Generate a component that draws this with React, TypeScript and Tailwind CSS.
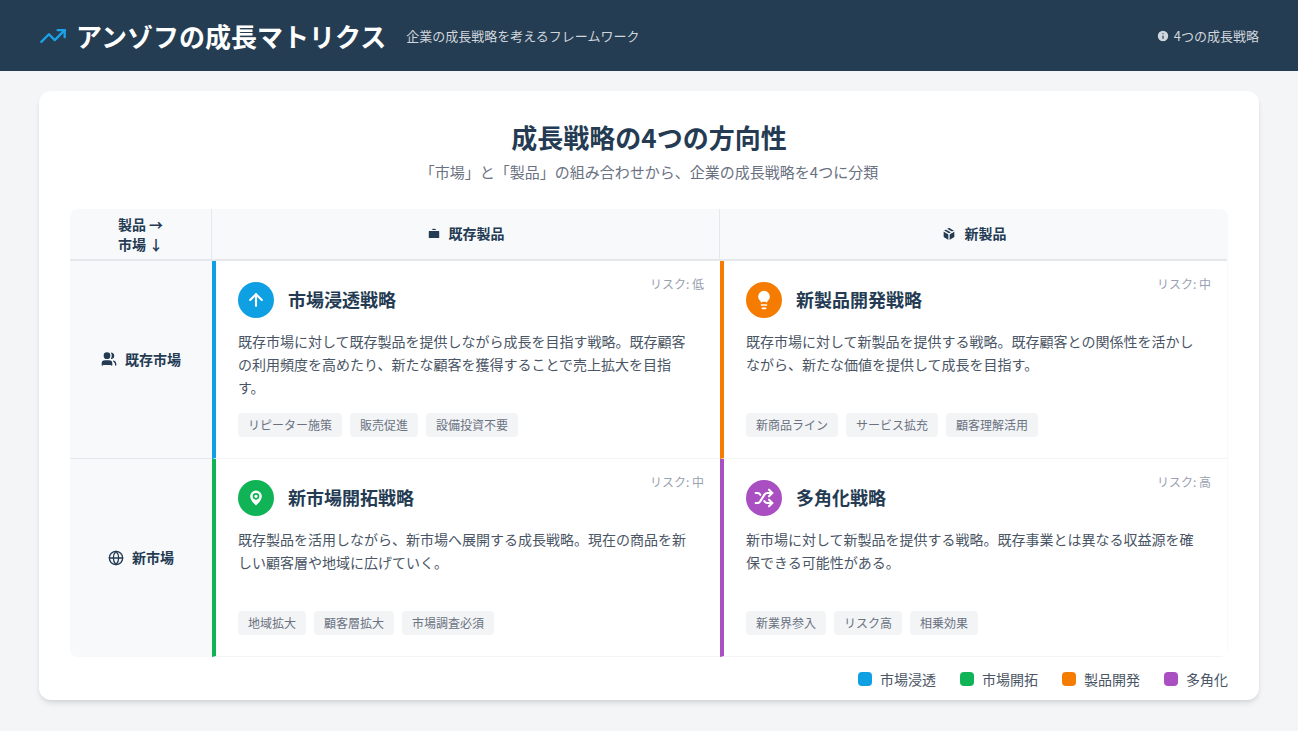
import React from "react";
import { TrendingUp, Info, ArrowUp, Lightbulb, MapPin, Shuffle, Users, Globe, Briefcase, Package } from "lucide-react";

const font = { fontFamily: '"Noto Sans CJK JP", "Noto Sans", sans-serif' };

type Cell = { title: string; risk: string; desc: string; tags: string[]; bar: string; bg: string; icon: React.ReactNode };

const cells: Cell[][] = [
  [
    { title: "市場浸透戦略", risk: "リスク: 低", desc: "既存市場に対して既存製品を提供しながら成長を目指す戦略。既存顧客の利用頻度を高めたり、新たな顧客を獲得することで売上拡大を目指す。", tags: ["リピーター施策", "販売促進", "設備投資不要"], bar: "border-[#0ea0e3]", bg: "bg-[#0ea0e3]", icon: <ArrowUp className="w-5 h-5" strokeWidth={2.5} /> },
    { title: "新製品開発戦略", risk: "リスク: 中", desc: "既存市場に対して新製品を提供する戦略。既存顧客との関係性を活かしながら、新たな価値を提供して成長を目指す。", tags: ["新商品ライン", "サービス拡充", "顧客理解活用"], bar: "border-[#f57c00]", bg: "bg-[#f57c00]", icon: <Lightbulb className="w-5 h-5" fill="white" strokeWidth={2} /> },
  ],
  [
    { title: "新市場開拓戦略", risk: "リスク: 中", desc: "既存製品を活用しながら、新市場へ展開する成長戦略。現在の商品を新しい顧客層や地域に広げていく。", tags: ["地域拡大", "顧客層拡大", "市場調査必須"], bar: "border-[#10b356]", bg: "bg-[#10b356]", icon: <MapPin className="w-5 h-5" fill="white" stroke="#10b356" strokeWidth={2} /> },
    { title: "多角化戦略", risk: "リスク: 高", desc: "新市場に対して新製品を提供する戦略。既存事業とは異なる収益源を確保できる可能性がある。", tags: ["新業界参入", "リスク高", "相乗効果"], bar: "border-[#a94fc2]", bg: "bg-[#a94fc2]", icon: <Shuffle className="w-5 h-5" strokeWidth={2.5} /> },
  ],
];

function CellView({ c }: { c: Cell }) {
  return (
    <div className={`relative bg-white border-l-4 ${c.bar} pl-[22px] pr-6 pt-[21px] h-[198px] border-b border-b-gray-100`}>
      <div className="absolute top-[14px] right-[16px] text-[12px] text-gray-400">{c.risk}</div>
      <div className="flex items-center gap-[14px]">
        <div className={`w-9 h-9 rounded-full ${c.bg} text-white flex items-center justify-center`}>{c.icon}</div>
        <div className="text-[18px] font-bold text-[#243b53]">{c.title}</div>
      </div>
      <p className="mt-[12px] text-[14px] leading-[23px] text-gray-600">{c.desc}</p>
      <div className="absolute left-[22px] top-[152px] flex gap-2">
        {c.tags.map((t) => (
          <span key={t} className="px-[10px] py-[3px] text-[12px] rounded bg-gray-100 text-gray-500">{t}</span>
        ))}
      </div>
    </div>
  );
}

export default function App() {
  return (
    <div style={font} className="w-[1298px] h-[731px] bg-[#f4f5f7] overflow-hidden">
      <header className="h-[71px] bg-[#243d52] flex items-center px-[39px]">
        <TrendingUp className="w-7 h-7 text-[#1aa3e8]" strokeWidth={2} />
        <h1 className="ml-[9px] text-[26px] font-bold text-white">アンゾフの成長マトリクス</h1>
        <span className="ml-[20px] text-[13px] text-gray-300">企業の成長戦略を考えるフレームワーク</span>
        <div className="ml-auto flex items-center gap-1 text-[13px] text-gray-300">
          <Info className="w-[14px] h-[14px] fill-gray-300 text-[#243d52]" />
          4つの成長戦略
        </div>
      </header>
      <main className="mx-[39px] mt-5 bg-white rounded-xl shadow-md h-[609px] px-[31px] pt-[26px]">
        <h2 className="text-center text-[26px] font-bold text-[#243b53] leading-[40px]">成長戦略の4つの方向性</h2>
        <p className="text-center text-[15px] text-gray-500 mt-[4px]">「市場」と「製品」の組み合わせから、企業の成長戦略を4つに分類</p>
        <div className="mt-[25px] rounded-lg overflow-hidden bg-[#f7f9fb] grid grid-cols-[142px_508px_507px]">
          <div className="h-[52px] flex flex-col items-center justify-center text-[14px] font-bold text-[#243b53] leading-[20px] border-r border-gray-200 border-b-2 border-b-gray-200">
            <span>製品 →</span><span>市場 ↓</span>
          </div>
          <div className="h-[52px] flex items-center justify-center gap-2 text-[14px] font-bold text-[#243b53] border-r border-gray-200 border-b-2 border-b-gray-200">
            <Briefcase className="w-[14px] h-[14px]" fill="#243b53" stroke="#f7f9fb" />既存製品
          </div>
          <div className="h-[52px] flex items-center justify-center gap-2 text-[14px] font-bold text-[#243b53] border-b-2 border-gray-200">
            <Package className="w-[16px] h-[16px]" fill="#243b53" stroke="#f7f9fb" />新製品
          </div>
          {cells.map((row, i) => (
            <React.Fragment key={i}>
              <div className={`flex items-center justify-center gap-2 text-[14px] font-bold text-[#243b53] ${i === 0 ? "border-b border-gray-200" : ""}`}>
                {i === 0 ? <Users className="w-4 h-4" fill="#243b53" /> : <Globe className="w-4 h-4" />}
                {i === 0 ? "既存市場" : "新市場"}
              </div>
              <CellView c={row[0]} />
              <CellView c={row[1]} />
            </React.Fragment>
          ))}
        </div>
        <div className="flex justify-end gap-6 mt-[12px] mr-[0px] text-[14px] text-gray-600">
          {[["bg-[#0ea0e3]", "市場浸透"], ["bg-[#10b356]", "市場開拓"], ["bg-[#f57c00]", "製品開発"], ["bg-[#a94fc2]", "多角化"]].map(([c, l]) => (
            <div key={l} className="flex items-center gap-2">
              <span className={`w-[14px] h-[14px] rounded-sm ${c}`} />
              {l}
            </div>
          ))}
        </div>
      </main>
    </div>
  );
}
